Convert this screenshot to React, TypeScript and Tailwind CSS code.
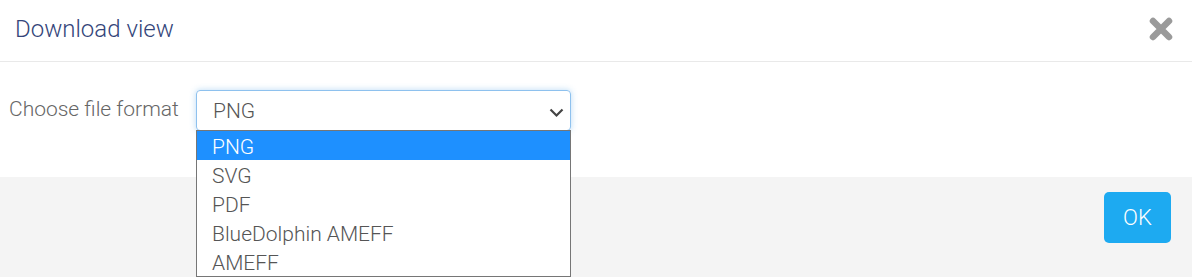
import { useState } from "react";

const FORMATS = ["PNG", "SVG", "PDF", "BlueDolphin AMEFF", "AMEFF"];

export default function App() {
  const [active] = useState("PNG");

  return (
    <div className="w-[1192px] h-[277px] bg-white overflow-hidden flex flex-col" style={{ fontFamily: "Roboto, 'Liberation Sans', sans-serif" }}>
      {/* header */}
      <div className="h-[62px] shrink-0 border-b border-[#e9e9e9] flex items-center justify-between pl-[15px] pr-[18px]">
        <h2 className="text-[24px] font-light text-[#34457a] leading-none mt-[-4px]">Download view</h2>
        <svg width="26" height="26" viewBox="0 0 26 26" className="mt-[-4px]">
          <path d="M5 5 L21 21 M21 5 L5 21" stroke="#9a9a9a" strokeWidth="6.5" strokeLinecap="round" />
        </svg>
      </div>

      {/* body */}
      <div className="h-[115px] shrink-0 flex items-start pl-[9px] pt-[28px]">
        <label className="text-[21px] font-light text-[#666] leading-none mt-[9px] w-[187px]">Choose file format</label>
        <div className="relative w-[375px]">
          <div className="h-[41px] rounded-[4px] border border-[#8ec1ee] shadow-[0_0_6px_rgba(102,175,233,0.45)] flex items-center justify-between pl-[16px] pr-[6px]">
            <span className="text-[21px] font-light text-[#555] leading-none mt-[2px]">{active}</span>
            <svg width="15" height="16" viewBox="0 0 15 16" className="mt-[2px]">
              <path d="M1.5 5.5 L7.5 11.5 L13.5 5.5" fill="none" stroke="#444" strokeWidth="2.2" />
            </svg>
          </div>
          <ul className="absolute left-0 top-[40px] w-[375px] bg-white border border-[#767676] z-10">
            {FORMATS.map((f) => (
              <li
                key={f}
                className={
                  "h-[29px] flex items-center pl-[15px] pt-[4px] text-[21px] font-light leading-none " +
                  (f === active ? "bg-[#1e90ff] text-white" : "text-[#555]")
                }
              >
                {f}
              </li>
            ))}
          </ul>
        </div>
      </div>

      {/* footer */}
      <div className="flex-1 bg-[#f4f4f4] flex justify-end items-start pt-[15px] pr-[21px]">
        <button className="w-[67px] h-[51px] rounded-[5px] bg-[#1daaf1] text-white text-[22px] font-light">OK</button>
      </div>
    </div>
  );
}
